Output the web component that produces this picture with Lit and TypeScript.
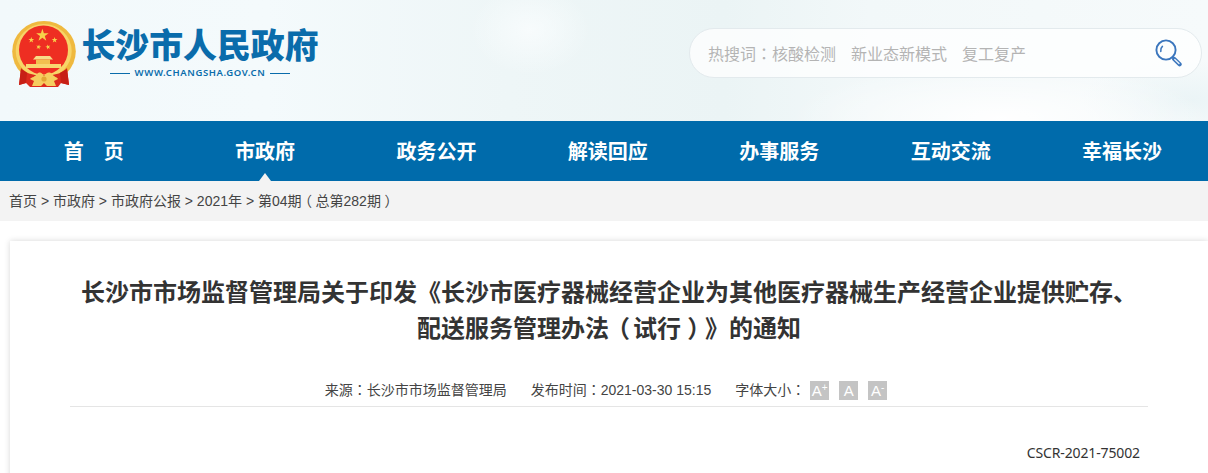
import { LitElement, html, css, svg } from "lit";
import { customElement } from "lit/decorators.js";

const star = (cx: number, cy: number, r: number, rot = 0) => {
  const pts: string[] = [];
  for (let i = 0; i < 10; i++) {
    const rad = i % 2 ? r * 0.38 : r;
    const a = ((-90 + rot + i * 36) * Math.PI) / 180;
    pts.push(`${(cx + rad * Math.cos(a)).toFixed(2)},${(cy + rad * Math.sin(a)).toFixed(2)}`);
  }
  return svg`<polygon points=${pts.join(" ")} fill="#f7d24a"/>`;
};

const emblem = html`<svg class="emblem" width="64" height="67" viewBox="0 0 64 67">
  <ellipse cx="32" cy="30.5" rx="31.8" ry="30.5" fill="#efb93f"/>
  <ellipse cx="31.7" cy="30" rx="28" ry="27" fill="#f7d468"/>
  <circle cx="31.5" cy="29" r="24.5" fill="#ee2e22"/>
  ${star(30.4, 14.3, 6.6)}${star(19.3, 19, 3.1)}${star(42.6, 19, 3.1)}${star(26.6, 26, 2.7, 15)}${star(36, 26, 2.7, -15)}
  <path d="M24 35 H38 L41 38.5 H21 Z" fill="#f8dc88"/>
  <rect x="24" y="38.5" width="14" height="5" fill="#f2c04f"/>
  <rect x="14" y="43" width="35" height="4" fill="#f8d670"/>
  <path d="M9 47 C14 52 20 54 25 54 H38 C44 54 50 52 55 47 L57 64 L49 62 L46 66 H18 L14 62 L7 64 Z" fill="#dc2a1d"/>
  <path d="M9 48 L7 64 L14 62 L15 52 Z M55 48 L57 64 L49 62 L48 52 Z" fill="#c71f15"/>
  <path d="M25 53 C28 50 30 52 32 55 C34 52 37 50 40 53 C42 56 45 56 46 58 L42 60 L44 65 H35 L32 62 L29 65 H20 L22 60 L18 58 C20 56 23 56 25 53 Z" fill="#f6cd5f"/>
  <circle cx="32" cy="58" r="2.6" fill="#e3a636"/>
</svg>`;

const searchIcon = html`<svg width="28" height="28" viewBox="0 0 28 28" fill="none">
  <circle cx="11" cy="11" r="9.6" stroke="#3b76bd" stroke-width="1.9"/>
  <path d="M5.8 12.4 C5.5 10 6.2 8.4 7.4 7.4" stroke="#3b76bd" stroke-width="1.6" stroke-linecap="round"/>
  <path d="M19.2 20 L24.6 25.2" stroke="#3b76bd" stroke-width="4.2" stroke-linecap="round"/>
  <path d="M19.8 20.6 L24 24.6" stroke="#eaf2f9" stroke-width="1.4" stroke-linecap="round"/>
</svg>`;

@customElement("app-root")
export class AppRoot extends LitElement {
  static styles = css`
    :host {
      display: block;
      width: 1208px;
      height: 473px;
      overflow: hidden;
      background: #fff;
      font-family: "Liberation Sans", "Noto Sans CJK SC", sans-serif;
      color: #333;
      text-spacing-trim: space-all;
      font-kerning: none;
    }
    .header {
      height: 121px;
      box-sizing: border-box;
      display: flex;
      justify-content: space-between;
      align-items: flex-start;
      padding: 21px 6px 0 12px;
      background:
        radial-gradient(ellipse 210px 55px at 1000px 118px, rgba(255, 255, 255, 0.95), transparent),
        radial-gradient(ellipse 110px 40px at 1190px 100px, rgba(232, 243, 245, 0.8), transparent),
        radial-gradient(ellipse 60px 45px at 530px 30px, rgba(250, 253, 254, 0.8), transparent),
        linear-gradient(90deg, #f2f9fb 0%, #f4fafc 22%, #eef6f7 42%, #ebf4f5 60%, #f2f8f9 72%, #f6fafb 100%);
    }
    .logo {
      display: flex;
      gap: 5px;
    }
    .emblem {
      flex: none;
    }
    .brand {
      display: flex;
      flex-direction: column;
      align-items: center;
      width: 238px;
      padding-top: 6px;
      color: #0a6cab;
    }
    .brand-name {
      font: 900 33.9px/34px "Noto Sans CJK SC", sans-serif;
      white-space: nowrap;
    }
    .brand-url {
      display: flex;
      align-items: center;
      gap: 5px;
      margin-top: 5px;
      font: 600 9.5px/14px "Noto Sans", sans-serif;
      letter-spacing: 0.6px;
      white-space: nowrap;
    }
    .brand-url i {
      display: block;
      width: 20px;
      height: 1px;
      background: #0a6cab;
    }
    .search {
      width: 513px;
      height: 50px;
      margin-top: 7px;
      box-sizing: border-box;
      display: flex;
      align-items: center;
      justify-content: space-between;
      padding: 0 18px 0 18px;
      border: 1px solid #e3eaed;
      border-radius: 25px;
      background: rgba(255, 255, 255, 0.72);
      color: #b4b4b4;
      font: 16px/24px "Noto Sans CJK SC", sans-serif;
    }
    .hot {
      display: flex;
      gap: 15px;
    }
    .nav {
      height: 60px;
      display: flex;
      padding-left: 8px;
      background: #006bab;
    }
    .nav a {
      position: relative;
      flex: 0 0 171.4px;
      text-align: center;
      color: #fff;
      font: 700 20px/60px "Noto Sans CJK SC", sans-serif;
      white-space: pre;
    }
    .nav a.active::after {
      content: "";
      position: absolute;
      left: 50%;
      bottom: 0;
      margin-left: -6px;
      border: 6px solid transparent;
      border-top: 0;
      border-bottom: 8px solid #f3f3f3;
    }
    .crumbs {
      height: 40px;
      padding-left: 9px;
      background: #f3f3f3;
      color: #444;
      font: 14px/40px "Liberation Sans", "Noto Sans CJK SC", sans-serif;
      white-space: pre;
    }
    .card {
      margin: 20px 0 0 10px;
      padding: 32px 60px 0;
      background: #fff;
      box-shadow: 0 0 6px rgba(0, 0, 0, 0.16);
    }
    .title {
      margin: 0;
      text-align: center;
      font: 700 24px/36px "Noto Sans CJK SC", sans-serif;
      color: #333;
    }
    .c {
      font-family: "Noto Sans CJK TC", sans-serif;
    }
    .pl,
    .pr {
      display: inline-block;
      width: 1em;
      line-height: 1;
      white-space: nowrap;
    }
    .pl {
      text-indent: -0.26em;
    }
    .pr {
      text-indent: 0.26em;
    }
    .meta {
      height: 32px;
      margin-top: 30px;
      box-sizing: border-box;
      display: flex;
      justify-content: center;
      align-items: flex-start;
      gap: 24px;
      padding-right: 6px;
      border-bottom: 1px solid #e5e5e5;
      font-size: 14px;
      line-height: 28px;
      color: #444;
    }
    .sizes {
      display: flex;
      align-items: flex-start;
    }
    .sizes b {
      display: block;
      width: 19px;
      height: 19px;
      margin: 6px 0 0 10px;
      background: #c4c4c4;
      color: #fff;
      font: 15px/20px "Liberation Sans", sans-serif;
      text-align: center;
    }
    .sizes b:first-of-type {
      margin-left: 5px;
    }
    .sizes sup {
      font-size: 10px;
      line-height: 0;
      vertical-align: 5px;
    }
    .doc {
      margin-top: 35px;
      padding-right: 8px;
      text-align: right;
      font: 14px/22px "Noto Sans", sans-serif;
      color: #333;
      height: 100px;
      letter-spacing: -0.13px;
    }
  `;

  render() {
    const items = ["首　页", "市政府", "政务公开", "解读回应", "办事服务", "互动交流", "幸福长沙"];
    const colon = html`<span class="c">：</span>`;
    return html`
      <header class="header">
        <div class="logo">
          ${emblem}
          <div class="brand">
            <div class="brand-name">长沙市人民政府</div>
            <div class="brand-url"><i></i>WWW.CHANGSHA.GOV.CN<i></i></div>
          </div>
        </div>
        <div class="search">
          <div class="hot">
            <span>热搜词${colon}核酸检测</span><span>新业态新模式</span><span>复工复产</span>
          </div>
          ${searchIcon}
        </div>
      </header>
      <nav class="nav">
        ${items.map((t, i) => html`<a class=${i === 1 ? "active" : ""}>${t}</a>`)}
      </nav>
      <div class="crumbs">首页 &gt; 市政府 &gt; 市政府公报 &gt; 2021年 &gt; 第04期<span class="pl">（</span>总第282期<span class="pr">）</span></div>
      <article class="card">
        <h1 class="title">
          长沙市市场监督管理局关于印发《长沙市医疗器械经营企业为其他医疗器械生产经营企业提供贮存、<br />配送服务管理办法<span class="pl">（</span>试行<span class="pr">）</span>》的通知
        </h1>
        <div class="meta">
          <span>来源${colon}长沙市市场监督管理局</span>
          <span>发布时间${colon}2021-03-30 15:15</span>
          <span class="sizes"><span>字体大小${colon}</span><b>A<sup>+</sup></b><b>A</b><b>A<sup>-</sup></b></span>
        </div>
        <div class="doc">CSCR-2021-75002</div>
      </article>
    `;
  }
}
